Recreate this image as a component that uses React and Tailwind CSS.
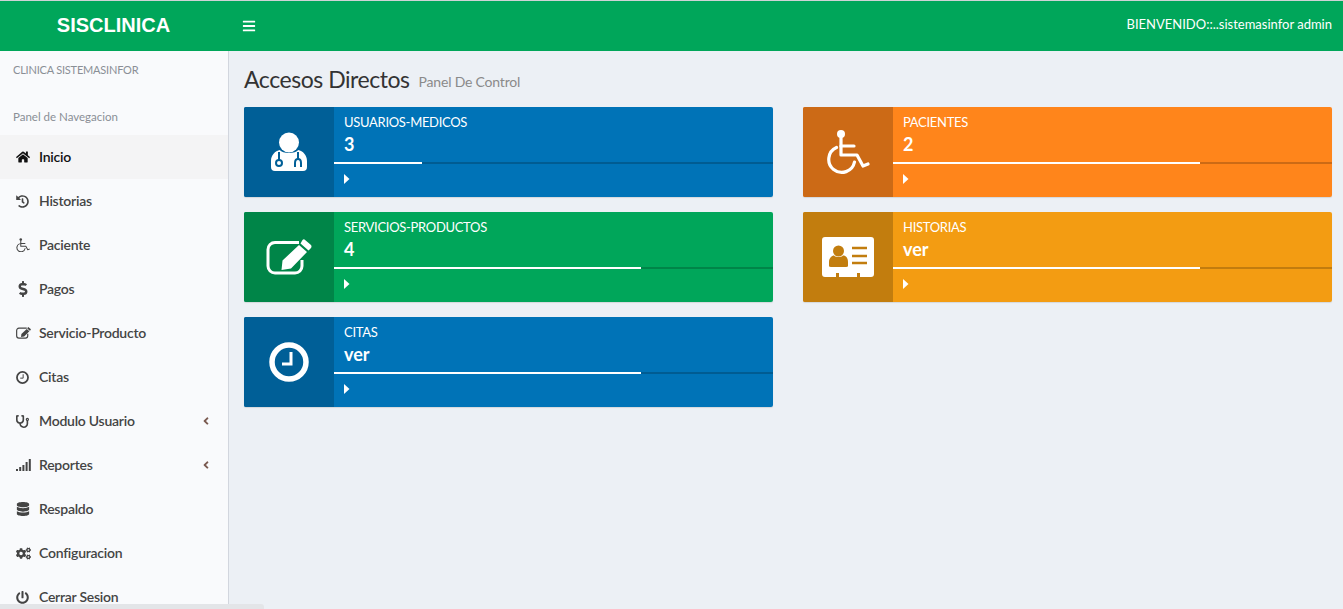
import React from "react";
import { FaHome, FaHistory, FaDollarSign, FaStethoscope, FaDatabase, FaCogs, FaPowerOff, FaBars, FaAngleLeft } from "react-icons/fa";

function Wheel({ size = 44, sw = 3.2 }) {
  return (
    <svg width={size} height={size * 46 / 44} viewBox="0 0 44 46" fill="none" stroke="currentColor" strokeLinecap="round" strokeLinejoin="round">
      <circle cx="15" cy="5" r="4" fill="currentColor" stroke="none" />
      <path d="M15 8 L15 26 L31 26 L37 37 L42 35" strokeWidth={sw} />
      <path d="M15 17 L28 17" strokeWidth={sw} />
      <path d="M10.5 18.5 A13 13 0 1 0 28.5 33" strokeWidth={sw} />
    </svg>
  );
}

function EditIcon({ size = 46, sw = 3 }) {
  return (
    <svg width={size} height={size * 36 / 46} viewBox="0 0 46 36" fill="none">
      <path d="M33 3.5 H9 A7 7 0 0 0 2 10.5 V27 A7 7 0 0 0 9 34 H29 A7 7 0 0 0 36 27 V21" stroke="currentColor" strokeWidth={sw} />
      <path d="M38.5 0.5 L45 6 Q46 7.5 45 9 L42.5 11.5 L34.5 4.5 L36.5 1 Q37.5 0 38.5 0.5 Z M33 6 L41 13 L25 29.5 L15.5 31 L16.5 21.5 Z" fill="currentColor" />
    </svg>
  );
}

function ClockIcon({ size = 40, sw = 5.5 }) {
  return (
    <svg width={size} height={size} viewBox="0 0 40 40" fill="none" stroke="currentColor">
      <circle cx="20" cy="20" r="17" strokeWidth={sw} />
      <path d="M22 10 V22 H13" strokeWidth="3" />
    </svg>
  );
}

function DoctorIcon({ fill }) {
  return (
    <svg width="36" height="40" viewBox="0 0 36 40" fill="none">
      <circle cx="18" cy="10.5" r="10" fill="white" />
      <path d="M9 18 C11 22 25 22 27 18 C32 19 36 23 36 29 V35 Q36 39 32 39 H4 Q0 39 0 35 V29 C0 23 4 19 9 18 Z" fill="white" />
      <path d="M8 20 V28" stroke={fill} strokeWidth="2" />
      <circle cx="8" cy="31" r="3" stroke={fill} strokeWidth="2" />
      <path d="M24 35 V31 Q24 27 27 27 Q30 27 30 31 V35 M27 27 V20" stroke={fill} strokeWidth="2" />
    </svg>
  );
}

function CardIcon({ fill }) {
  return (
    <svg width="52" height="40" viewBox="0 0 52 40">
      <path d="M3 0 H49 Q52 0 52 3 V37 Q52 40 49 40 H38 V36 H35 V40 H17 V36 H14 V40 H3 Q0 40 0 37 V3 Q0 0 3 0 Z" fill="white" />
      <circle cx="16.5" cy="14" r="5.5" fill={fill} />
      <path d="M7 29 V25 C7 21 10 18.5 12 18.5 C14 20.5 19 20.5 21 18.5 C24 18.5 26 21 26 25 V29 Q26 30 24 30 H9 Q7 30 7 29 Z" fill={fill} />
      <path d="M30 11 H45 M30 19 H45 M30 26 H45" stroke={fill} strokeWidth="2.6" />
    </svg>
  );
}

function SignalIcon() {
  return (
    <svg width="15" height="12" viewBox="0 0 15 12" fill="currentColor">
      <rect x="0" y="10" width="2" height="2" />
      <rect x="3.2" y="8" width="2" height="4" />
      <rect x="6.4" y="6" width="2" height="6" />
      <rect x="9.6" y="3" width="2" height="9" />
      <rect x="12.8" y="0" width="2" height="12" />
    </svg>
  );
}

function Caret() {
  return (
    <svg width="6" height="10" viewBox="0 0 6 10" fill="white"><path d="M0 0 L5.5 5 L0 10 Z" /></svg>
  );
}

const menu = [
  { label: "Inicio", icon: <FaHome className="text-[14px]" />, active: true },
  { label: "Historias", icon: <FaHistory className="text-[13px]" /> },
  { label: "Paciente", icon: <Wheel size={14} sw={3.2} /> },
  { label: "Pagos", icon: <FaDollarSign className="text-[16px] -ml-[1px]" /> },
  { label: "Servicio-Producto", icon: <EditIcon size={15} sw={3.6} /> },
  { label: "Citas", icon: <ClockIcon size={13} sw={5.5} /> },
  { label: "Modulo Usuario", icon: <FaStethoscope className="text-[13px]" />, arrow: true },
  { label: "Reportes", icon: <SignalIcon />, arrow: true },
  { label: "Respaldo", icon: <FaDatabase className="text-[14px]" /> },
  { label: "Configuracion", icon: <FaCogs className="text-[15px]" /> },
  { label: "Cerrar Sesion", icon: <FaPowerOff className="text-[13px]" /> },
];

const cards = [
  { title: "USUARIOS-MEDICOS", value: "3", pct: "20%", bg: "bg-[#0073b7]", dark: "bg-[#005f97]", icon: <DoctorIcon fill="#005f97" /> },
  { title: "PACIENTES", value: "2", pct: "70%", bg: "bg-[#ff851b]", dark: "bg-[#cc6a16]", icon: <span className="text-white"><Wheel /></span> },
  { title: "SERVICIOS-PRODUCTOS", value: "4", pct: "70%", bg: "bg-[#00a65a]", dark: "bg-[#008548]", icon: <span className="text-white"><EditIcon /></span> },
  { title: "HISTORIAS", value: "ver", pct: "70%", bg: "bg-[#f39c12]", dark: "bg-[#c27d0e]", icon: <CardIcon fill="#c27d0e" /> },
  { title: "CITAS", value: "ver", pct: "70%", bg: "bg-[#0073b7]", dark: "bg-[#005f97]", icon: <span className="text-white"><ClockIcon /></span> },
];

function Card({ c }) {
  return (
    <div className={`flex h-[90px] rounded-[2px] shadow-[0_1px_1px_rgba(0,0,0,0.1)] text-white ${c.bg}`}>
      <div className={`w-[90px] shrink-0 flex items-center justify-center rounded-l-[2px] ${c.dark}`}>{c.icon}</div>
      <div className="flex-1 flex flex-col">
        <div className="px-[10px] pt-[7px] text-[13px] leading-[17px] h-[26px] tracking-[-0.3px]">{c.title}</div>
        <div className="px-[10px] text-[18px] leading-[22px] font-bold h-[29px]">{c.value}</div>
        <div className="h-[2px] bg-black/20">
          <div className="h-[2px] bg-white" style={{ width: c.pct }} />
        </div>
        <div className="px-[10px] pt-[10px]"><Caret /></div>
      </div>
    </div>
  );
}

export default function App() {
  return (
    <div className="relative h-[609px] w-full overflow-hidden bg-[#ecf0f5] font-['Lato',sans-serif] text-[14px] text-[#333]">
      <div className="h-[1px] bg-[#cfd3d6]" />
      <header className="flex h-[50px] items-center bg-[#00a65a] text-white">
        <div className="w-[227px] text-center font-['Liberation_Sans',sans-serif] text-[20px] font-bold pb-[2px]">SISCLINICA</div>
        <FaBars className="ml-[15px] text-[14px]" />
        <div className="ml-auto pr-[11px] pb-[2px] text-[13px]">BIENVENIDO::..sistemasinfor admin</div>
      </header>
      <div className="flex h-[558px]">
        <aside className="w-[229px] shrink-0 border-r border-[#d2d6de] bg-[#f9fafc] overflow-hidden">
          <div className="pl-[13px] pt-[11px] h-[61px] text-[11px] leading-[15px] tracking-[-0.2px] text-[#8a8f96]">CLINICA SISTEMASINFOR</div>
          <div className="pl-[13px] h-[23px] text-[11.5px] leading-[10px] text-[#8a8f96]">Panel de Navegacion</div>
          <nav>
            {menu.map(({ label, icon, active, arrow }) => (
              <div key={label} className={`flex h-[44px] items-center pl-[16px] pr-[16px] font-semibold ${active ? "bg-[#f4f4f5] text-[#111]" : "text-[#444]"}`}>
                <span className="w-[23px] shrink-0 flex">{icon}</span>
                <span className="pb-[2px] tracking-[-0.25px]">{label}</span>
                {arrow && <FaAngleLeft className="ml-auto text-[12px] text-[#7a5a50]" />}
              </div>
            ))}
          </nav>
        </aside>
        <main className="flex-1 pl-[15px] pr-[11px]">
          <div className="flex items-baseline h-[56px] pt-[13px]">
            <h1 className="text-[23px] leading-[30px] tracking-[-0.45px] text-[#333]">Accesos Directos</h1>
            <span className="ml-[9px] text-[14px] tracking-[-0.2px] text-[#8a8a8a] -translate-y-[1px]">Panel De Control</span>
          </div>
          <div className="grid grid-cols-2 gap-x-[30px] gap-y-[15px]">
            {cards.map((c) => <Card key={c.title} c={c} />)}
          </div>
        </main>
      </div>
      <div className="absolute bottom-0 left-0 h-[5px] w-[264px] rounded-tr-[3px] bg-[#e3e5e8]" />
    </div>
  );
}
